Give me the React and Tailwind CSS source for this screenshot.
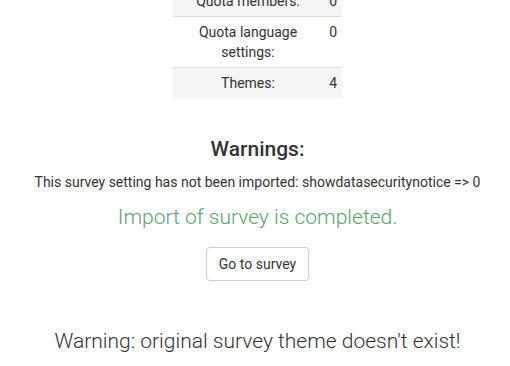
export default function App() {
  const rows = [
    { label: "Quota members:", value: "0", striped: true },
    { label: "Quota language settings:", value: "0", striped: false },
    { label: "Themes:", value: "4", striped: true },
  ];
  return (
    <div className="w-[510px] h-[366px] overflow-hidden bg-white text-[#333] font-['Roboto',sans-serif]">
      <div className="flex flex-col items-center pl-[5px]">
        <table className="mt-[-14px] w-[169px] border-collapse text-[14px] leading-[20px]">
          <tbody>
            {rows.map((r, i) => (
              <tr key={i} className={r.striped ? "bg-[#f5f5f5]" : ""}>
                <td className={`w-[150px] px-[8px] py-[5px] text-center align-top ${i > 0 ? "border-t border-[#dddddd]" : ""}`}>
                  {r.label}
                </td>
                <td className={`pl-[3px] pr-[5px] py-[5px] text-right align-top ${i > 0 ? "border-t border-[#dddddd]" : ""}`}>
                  {r.value}
                </td>
              </tr>
            ))}
          </tbody>
        </table>
        <h2 className="mt-[39px] text-[21px] leading-[24px] font-medium text-[#333]">Warnings:</h2>
        <p className="mt-[11px] text-[14px] leading-[20px] text-[#333]">
          This survey setting has not been imported: showdatasecuritynotice =&gt; 0
        </p>
        <p className="mt-[13px] text-[21px] leading-[25px] font-light text-[#5ba36d]">
          Import of survey is completed.
        </p>
        <button className="mt-[17px] h-[34px] px-[12px] border border-[#cccccc] rounded-[4px] bg-white text-[14px] text-[#333]">
          Go to survey
        </button>
        <p className="mt-[47px] text-[21px] leading-[26px] font-light text-[#333]">
          Warning: original survey theme doesn't exist!
        </p>
      </div>
    </div>
  );
}
